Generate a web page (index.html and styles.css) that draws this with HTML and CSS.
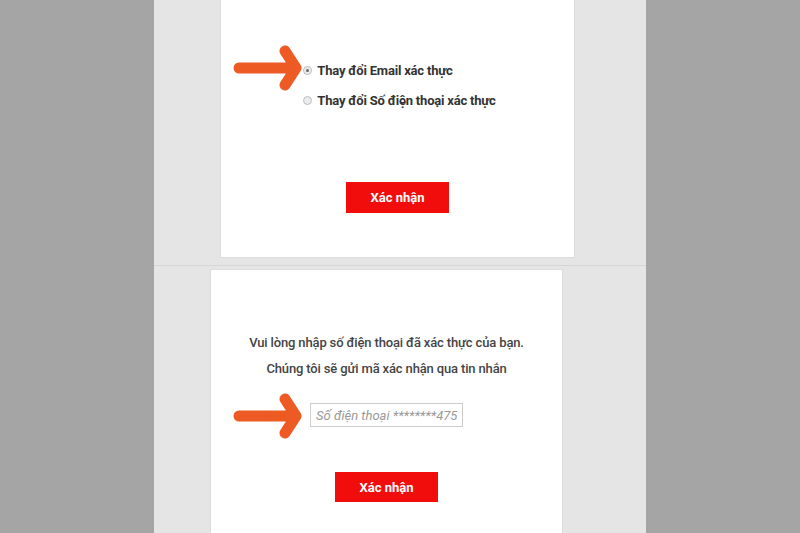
FILE: index.html
```html
<!DOCTYPE html>
<html>
  <head>
    <meta charset="utf-8">
    <title>Xác thực tài khoản</title>
    <link rel="stylesheet" href="styles.css">
  </head>
  <body>
    <div class="page">
      <div class="top">
        <div class="card card-top">
          <svg class="arrow arrow-top" width="80" height="56" viewBox="0 0 80 56">
            <path d="M10 27 H66 M56 10 L67 27 L56 44" />
          </svg>
          <form class="options">
            <label class="option">
              <input type="radio" name="change" checked>
              <span>Thay đổi Email xác thực</span>
            </label>
            <label class="option">
              <input type="radio" name="change">
              <span>Thay đổi Số điện thoại xác thực</span>
            </label>
          </form>
          <button type="button" class="btn">Xác nhận</button>
        </div>
      </div>
      <div class="bottom">
        <div class="card card-bottom">
          <svg class="arrow arrow-bottom" width="80" height="56" viewBox="0 0 80 56">
            <path d="M10 27 H66 M56 10 L67 27 L56 44" />
          </svg>
          <p class="note">Vui lòng nhập số điện thoại đã xác thực của bạn.</p>
          <p class="note">Chúng tôi sẽ gửi mã xác nhận qua tin nhắn</p>
          <input type="text" class="phone" placeholder="Số điện thoại ********475">
          <button type="button" class="btn">Xác nhận</button>
        </div>
      </div>
    </div>
  </body>
</html>
```

FILE: styles.css
```css
body {
  margin: 0;
  background-color: #a5a5a5;
  font-family: Roboto, "Liberation Sans", sans-serif;
  color: #333;
}
.page {
  width: 492px;
  height: 533px;
  margin: 0 auto;
  background-color: #e5e5e5;
  overflow: hidden;
}
.top {
  padding: 0 71px 7px 66px;
  border-bottom: 1px solid #d6d6d6;
}
.bottom {
  padding: 3px 83px 0 56px;
}
.card {
  position: relative;
  background-color: #fff;
  border: 1px solid #dcdcdc;
  box-sizing: border-box;
  text-align: center;
}
.card-top {
  height: 258px;
  border-top: 0;
  padding-top: 55px;
}
.card-bottom {
  height: 300px;
  padding-top: 60px;
}
.options {
  display: inline-flex;
  flex-direction: column;
  align-items: flex-start;
  margin-left: 4px;
}
.option {
  display: flex;
  align-items: center;
  gap: 5px;
  height: 30px;
  font-size: 13px;
  font-weight: bold;
  letter-spacing: -0.2px;
  color: #333;
}
.option input {
  appearance: none;
  -webkit-appearance: none;
  margin: 0;
  width: 9px;
  height: 9px;
  border-radius: 50%;
  border: 1px solid #bdbdbd;
  background-color: #ececec;
  box-sizing: border-box;
  position: relative;
}
.option input:checked::after {
  content: "";
  position: absolute;
  left: 2px;
  top: 2px;
  width: 3px;
  height: 3px;
  border-radius: 50%;
  background-color: #666;
}
.btn {
  display: block;
  margin: 67px auto 0;
  width: 103px;
  height: 31px;
  border: 0;
  background-color: #f20d0d;
  color: #fff;
  font-family: Roboto, "Liberation Sans", sans-serif;
  font-size: 13px;
  font-weight: bold;
}
.card-bottom .btn {
  margin-top: 45px;
  height: 30px;
}
.note {
  margin: 0;
  line-height: 26px;
  font-size: 13px;
  font-weight: 500;
  letter-spacing: -0.15px;
  color: #444;
}
.phone {
  display: block;
  margin: 21px auto 0;
  width: 153px;
  height: 24px;
  box-sizing: border-box;
  border: 1px solid #ccc;
  padding: 0 5px;
  font-family: Roboto, "Liberation Sans", sans-serif;
  font-size: 13px;
  font-style: italic;
}
.phone::placeholder {
  color: #999;
}
.arrow {
  position: absolute;
}
.arrow path {
  fill: none;
  stroke: #ee5a24;
  stroke-width: 11;
  stroke-linecap: round;
  stroke-linejoin: round;
}
.arrow-top {
  left: 8px;
  top: 41px;
}
.arrow-bottom {
  left: 18px;
  top: 119px;
}
```
